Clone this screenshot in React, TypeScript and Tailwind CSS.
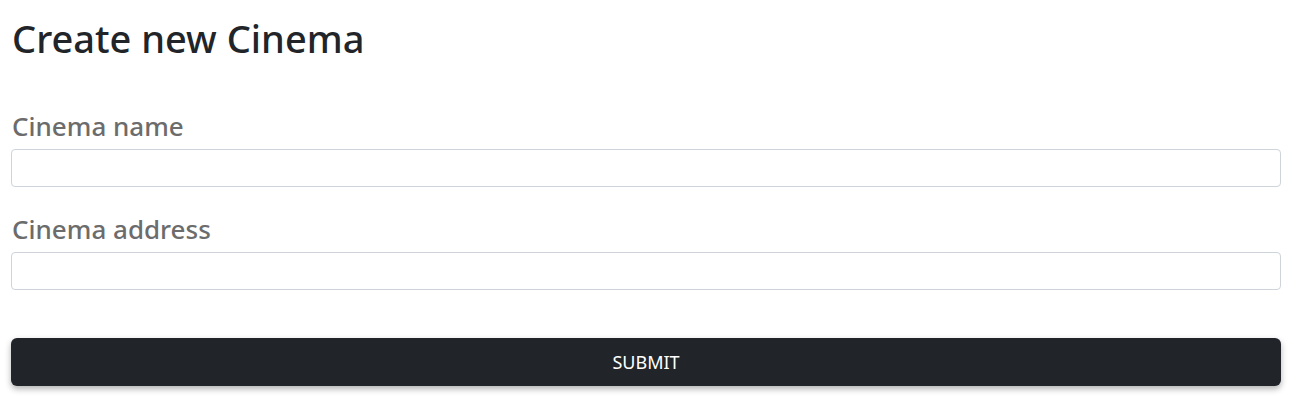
const fieldClass =
  "block w-full h-[38px] rounded-[4px] border border-[#ced4da] bg-white px-3 text-base text-[#212529] outline-none";

const labelClass =
  "block pl-px text-[26px] leading-[32px] font-medium text-[#6c6c6c] mb-[7px]";

const App = () => {
  return (
    <div className="min-h-screen bg-white font-['Segoe_UI','Noto_Sans',sans-serif] text-[#212529]">
      <div className="pl-[11px] pr-[19px]">
        <h1 className="pt-[14px] text-[38px] font-medium leading-[48px] pl-px">Create new Cinema</h1>

        <form className="mt-[48px]" onSubmit={(e) => e.preventDefault()}>
          <div>
            <label className={labelClass}>Cinema name</label>
            <input type="text" className={fieldClass} />
          </div>

          <div className="mt-[26px]">
            <label className={labelClass}>Cinema address</label>
            <input type="text" className={fieldClass} />
          </div>

          <button
            type="submit"
            className="mt-[48px] block w-full h-[48px] rounded-[6px] bg-[#212529] text-white text-[18px] uppercase shadow-[0_3px_6px_rgba(0,0,0,0.3)]"
          >
            Submit
          </button>
        </form>
      </div>
    </div>
  );
};

export default App;
